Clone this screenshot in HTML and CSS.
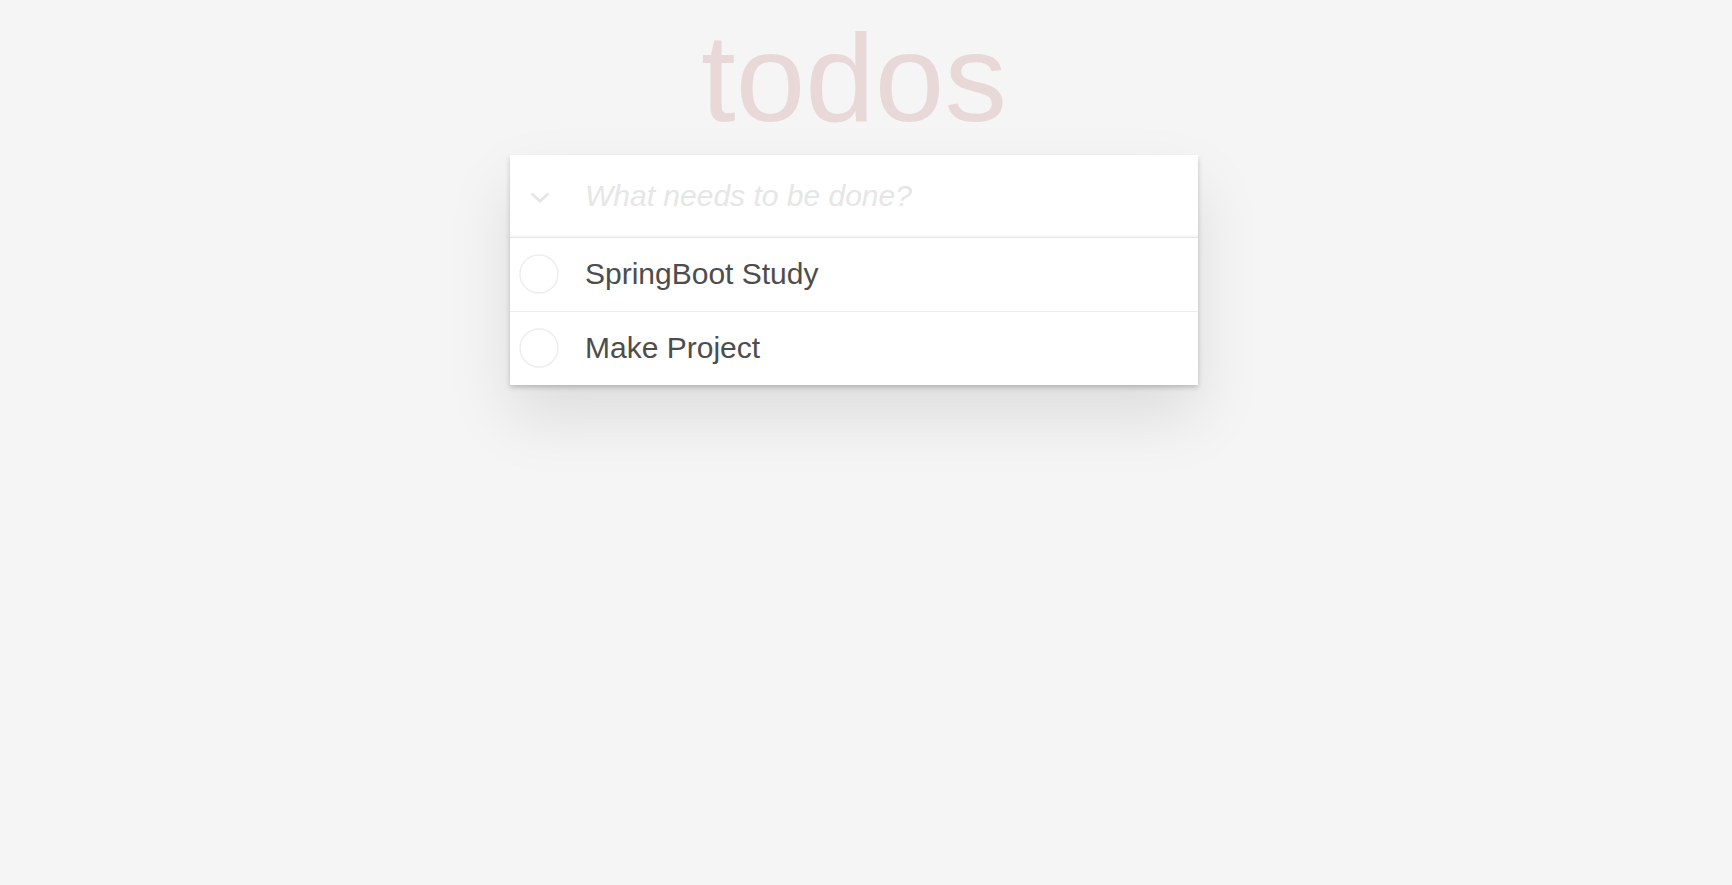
FILE: index.html
```html
<!DOCTYPE html>
<html lang="en">
	<head>
		<meta charset="UTF-8">
		<title>
			Todos
		</title>
		<link rel="stylesheet" href="styles.css">
	</head>
	<body>
		<div class="page">
			<h1 class="title">todos</h1>
			<section class="todoapp">
				<header class="header">
					<label class="toggle-all">
						<svg width="20" height="11" viewBox="0 0 20 11">
							<polyline points="1.5,1.5 10,9 18.5,1.5" fill="none" stroke="#e6e6e6" stroke-width="3"/>
						</svg>
					</label>
					<input class="new-todo" type="text" placeholder="What needs to be done?">
				</header>
				<ul class="todo-list">
					<li>
						<span class="check">
							<svg width="40" height="40" viewBox="0 0 40 40">
								<circle cx="20" cy="20" r="19" fill="none" stroke="#ededed" stroke-width="1.4"/>
							</svg>
						</span>
						<span class="text">SpringBoot Study</span>
					</li>
					<li>
						<span class="check">
							<svg width="40" height="40" viewBox="0 0 40 40">
								<circle cx="20" cy="20" r="19" fill="none" stroke="#ededed" stroke-width="1.4"/>
							</svg>
						</span>
						<span class="text">Make Project</span>
					</li>
				</ul>
			</section>
		</div>
	</body>
</html>
```
FILE: styles.css
```css
* { padding: 0; margin: 0; box-sizing: border-box; }
html, body { height: 100%; }
body {
	font: 30px "Liberation Sans", Arial, sans-serif;
	color: #4d4d4d;
	background: #f5f5f5;
}
ul { list-style: none; }

/* page is centered as if a scrollbar took the right edge */
.page {
	min-height: 100%;
	padding: 15px 24px 0 0;
}

.title {
	font-size: 125px;
	font-weight: 100;
	line-height: 125px;
	text-align: center;
	color: #e9d8d8;
}

.todoapp {
	width: 688px;
	margin: 15px auto 0;
	background: #fff;
	box-shadow: 0 2.5px 5px 0 rgba(0, 0, 0, 0.2), 0 31px 62px 0 rgba(0, 0, 0, 0.1);
}

/* input row */
.header {
	display: flex;
	align-items: center;
	box-shadow: inset 0 -2px 1px rgba(0, 0, 0, 0.03);
}
.toggle-all {
	display: flex;
	justify-content: center;
	width: 60px;
	padding-top: 2px;
}
.new-todo {
	flex: 1;
	height: 82px;
	padding: 20px 20px 20px 15px;
	border: none;
	outline: none;
	background: transparent;
	font: inherit;
	line-height: 42px;
	color: inherit;
}
.new-todo::placeholder {
	font-style: italic;
	color: #e6e6e6;
}

/* items */
.todo-list {
	border-top: 1px solid #e6e6e6;
}
.todo-list li {
	display: flex;
	align-items: center;
	padding: 18px 0 19px;
	line-height: 36px;
	border-bottom: 1px solid #ededed;
}
.todo-list li:last-child {
	border-bottom: none;
}
.check {
	display: flex;
	justify-content: center;
	width: 57px;
	height: 36px;
	align-items: center;
}
.check svg { display: block; }
.text {
	margin-left: 18px;
}
```
